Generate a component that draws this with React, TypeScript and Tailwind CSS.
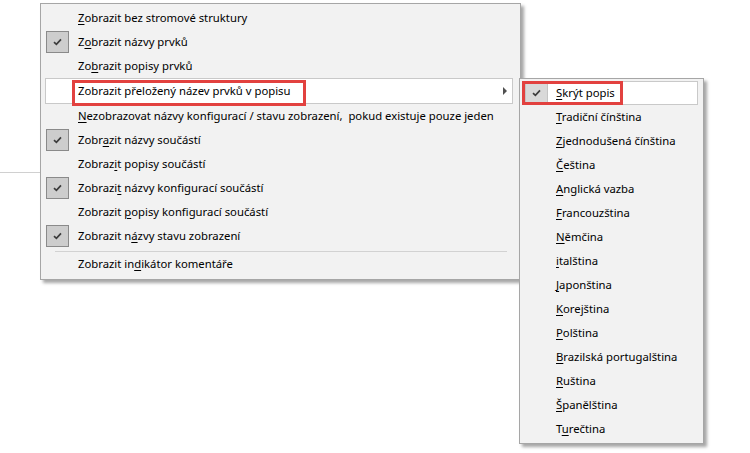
import React from "react";

type Item = {
  pre?: string;
  u?: string;
  post?: string;
  checked?: boolean;
  hl?: boolean;
  arrow?: boolean;
  sep?: boolean;
};

const mainItems: Item[] = [
  { pre: "", u: "Z", post: "obrazit bez stromové struktury" },
  { pre: "Z", u: "o", post: "brazit názvy prvků", checked: true },
  { pre: "Zo", u: "b", post: "razit popisy prvků" },
  { pre: "Zobrazit přeložený název prvků v popisu", u: "", post: "", hl: true, arrow: true },
  { pre: "", u: "N", post: "ezobrazovat názvy konfigurací / stavu zobrazení,  pokud existuje pouze jeden" },
  { pre: "Zobr", u: "a", post: "zit názvy součástí", checked: true },
  { pre: "Zobraz", u: "i", post: "t popisy součástí" },
  { pre: "Zobrazi", u: "t", post: " názvy konfigurací součástí", checked: true },
  { pre: "Zobrazit ", u: "p", post: "opisy konfigurací součástí" },
  { pre: "Zobrazit n", u: "á", post: "zvy stavu zobrazení", checked: true },
  { sep: true },
  { pre: "Zobrazit in", u: "d", post: "ikátor komentáře" },
];

const subItems: Item[] = [
  { pre: "", u: "S", post: "krýt popis", checked: true, hl: true },
  { pre: "", u: "T", post: "radiční čínština" },
  { pre: "", u: "Z", post: "jednodušená čínština" },
  { pre: "", u: "Č", post: "eština" },
  { pre: "", u: "A", post: "nglická vazba" },
  { pre: "", u: "F", post: "rancouzština" },
  { pre: "", u: "N", post: "ěmčina" },
  { pre: "", u: "i", post: "talština" },
  { pre: "", u: "J", post: "aponština" },
  { pre: "", u: "K", post: "orejština" },
  { pre: "", u: "P", post: "olština" },
  { pre: "", u: "B", post: "razilská portugalština" },
  { pre: "", u: "R", post: "uština" },
  { pre: "", u: "Š", post: "panělština" },
  { pre: "T", u: "u", post: "rečtina" },
];

function Label({ it }: { it: Item }) {
  return (
    <span className="whitespace-pre pt-[1px] text-black">
      {it.pre}
      {it.u ? (
        <span className="underline decoration-1 underline-offset-[2px]">{it.u}</span>
      ) : null}
      {it.post}
    </span>
  );
}

function Check({ light }: { light?: boolean }) {
  return (
    <div
      className={
        "flex h-[22px] w-[23px] items-center justify-center border " +
        (light ? "border-[#c4c4c4] bg-[#d9d9d9]" : "border-[#8a8a8a] bg-[#cdcdcd]")
      }
    >
      <svg width="9" height="8" viewBox="0 0 9 8">
        <path d="M1 4.2 L3.4 6.4 L8 1.4" fill="none" stroke="#3c3c3c" strokeWidth="1.7" />
      </svg>
    </div>
  );
}

export default function App() {
  return (
    <div
      className="relative h-[453px] w-[750px] overflow-hidden bg-white text-[11.3px]"
      style={{ fontFamily: '"Noto Sans", "Segoe UI", sans-serif' }}
    >
      <div className="absolute left-0 top-[172px] h-px w-[40px] bg-[#d0d0d0]" />

      {/* main menu */}
      <div className="absolute left-[40px] top-[3px] w-[481px] border border-[#a6a6a6] bg-[#f2f2f2] pb-[3px] pt-[2px] shadow-[3px_3px_3px_rgba(0,0,0,0.35)]">
        {mainItems.map((it, i) =>
          it.sep ? (
            <div key={i} className="flex h-[4px] items-end pl-[14px] pr-[13px]">
              <div className="h-px w-full bg-[#d2d2d2]" />
            </div>
          ) : (
            <div
              key={i}
              className={
                "relative ml-[4px] mr-[7px] flex items-center border " +
                (it.hl ? "h-[26px] border-[#c9c9c9] bg-white" : "h-6 border-transparent")
              }
            >
              <div className="flex w-[32px] shrink-0 items-center">
                {it.checked ? <Check /> : null}
              </div>
              <Label it={it} />
              {it.arrow ? (
                <div className="ml-auto mr-[5px] h-0 w-0 border-y-[4px] border-l-[4px] border-y-transparent border-l-[#505050]" />
              ) : null}
              {it.hl ? (
                <div className="absolute left-[26px] top-[1px] h-[26px] w-[234px] border-[3px] border-[#e2413f]" />
              ) : null}
            </div>
          )
        )}
      </div>

      {/* submenu */}
      <div className="absolute left-[519px] top-[78px] w-[185px] border border-[#a6a6a6] bg-[#f2f2f2] py-[2px] shadow-[3px_3px_3px_rgba(0,0,0,0.35)]">
        {subItems.map((it, i) => (
          <div
            key={i}
            className={
              "relative ml-[2px] mr-[5px] flex h-6 items-center border " +
              (it.hl ? "border-[#c9c9c9] bg-white" : "border-transparent")
            }
          >
            <div className="flex w-[33px] shrink-0 items-center pl-[2px]">
              {it.checked ? <Check light /> : null}
            </div>
            <Label it={it} />
            {it.hl ? (
              <div className="absolute left-[-1px] top-[-1px] h-[24px] w-[101px] border-[3px] border-[#e2413f]" />
            ) : null}
          </div>
        ))}
      </div>
    </div>
  );
}
